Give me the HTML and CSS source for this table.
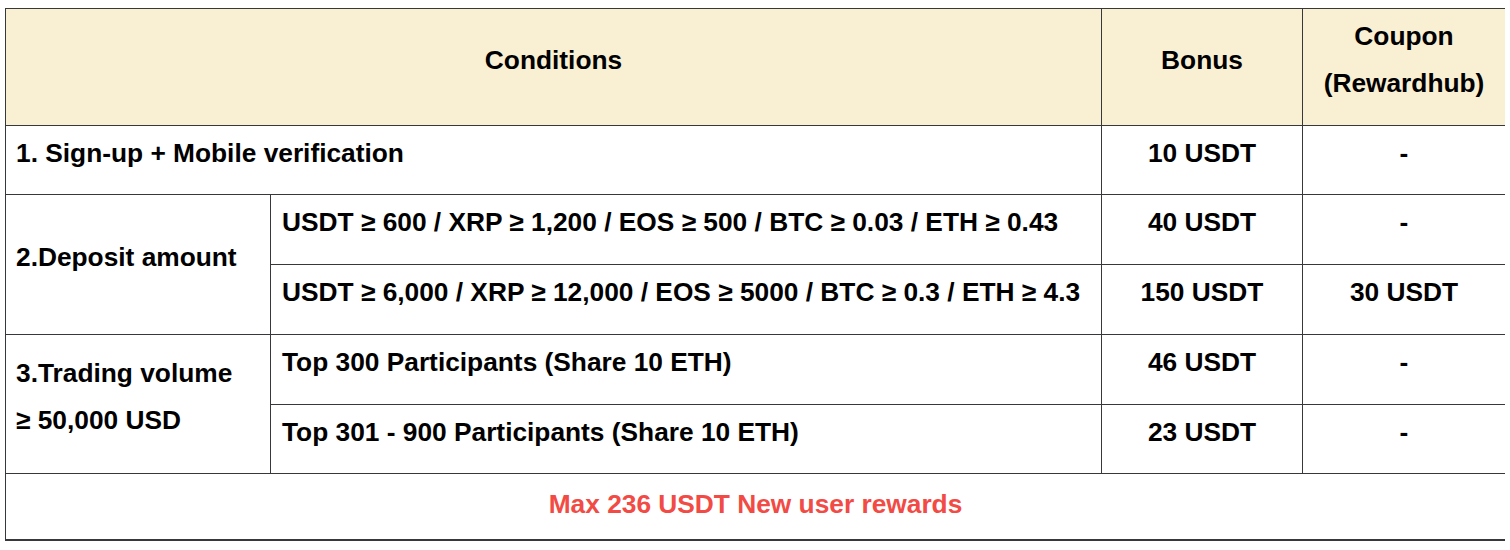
FILE: index.html
```html
<!DOCTYPE html>
<html lang="en">
<head>
<meta charset="utf-8">
<title>New user rewards</title>
<link rel="stylesheet" href="styles.css">
</head>
<body>
<table class="rewards">
  <colgroup>
    <col class="c1"><col class="c2"><col class="c3"><col class="c4">
  </colgroup>
  <thead>
    <tr class="head-row">
      <th colspan="2">Conditions</th>
      <th>Bonus</th>
      <th>Coupon<br>(Rewardhub)</th>
    </tr>
  </thead>
  <tbody>
    <tr class="r69">
      <td colspan="2" class="left first">1. Sign-up + Mobile verification</td>
      <td class="center">10 USDT</td>
      <td class="center">-</td>
    </tr>
    <tr class="r70">
      <td rowspan="2" class="left first">2.Deposit amount</td>
      <td class="left">USDT ≥ 600 / XRP ≥ 1,200 / EOS ≥ 500 / BTC ≥ 0.03 / ETH ≥ 0.43</td>
      <td class="center">40 USDT</td>
      <td class="center">-</td>
    </tr>
    <tr class="r70">
      <td class="left">USDT ≥ 6,000 / XRP ≥ 12,000 / EOS ≥ 5000 / BTC ≥ 0.3 / ETH ≥ 4.3</td>
      <td class="center">150 USDT</td>
      <td class="center">30 USDT</td>
    </tr>
    <tr class="r70">
      <td rowspan="2" class="left first">3.Trading volume<br>≥ 50,000 USD</td>
      <td class="left">Top 300 Participants (Share 10 ETH)</td>
      <td class="center">46 USDT</td>
      <td class="center">-</td>
    </tr>
    <tr class="r69">
      <td class="left">Top 301 - 900 Participants (Share 10 ETH)</td>
      <td class="center">23 USDT</td>
      <td class="center">-</td>
    </tr>
    <tr class="foot-row">
      <td colspan="4" class="center highlight">Max 236 USDT New user rewards</td>
    </tr>
  </tbody>
</table>
</body>
</html>
```

FILE: styles.css
```css
html, body {
  background: #ffffff;
}
body {
  margin: 8px 5px;
  font-family: "Liberation Sans", Arial, sans-serif;
  color: #000000;
}
.rewards {
  width: 1500px;
  border-collapse: collapse;
  table-layout: fixed;
  font-size: 26.3px;
  font-weight: bold;
  line-height: 47px;
}
.c1 { width: 265px; }
.c2 { width: 831px; }
.c3 { width: 201px; }
.c4 { width: 203px; }

.rewards th,
.rewards td {
  border: 1px solid #36383b;
  vertical-align: middle;
  padding: 0 11px 14px 11px;
  white-space: nowrap;
}
.rewards td.first {
  padding-left: 10px;
}
.rewards tr:last-child td {
  border-bottom: 2px solid #36383b;
}
.rewards th {
  background: #f9efd3;
  text-align: center;
  font-weight: bold;
}
.head-row { height: 117px; }
.r69 { height: 69px; }
.r70 { height: 70px; }
.foot-row { height: 66px; }
.foot-row td { padding-bottom: 4px; }

.left { text-align: left; }
.center { text-align: center; }
.highlight { color: #f24a44; }
```
